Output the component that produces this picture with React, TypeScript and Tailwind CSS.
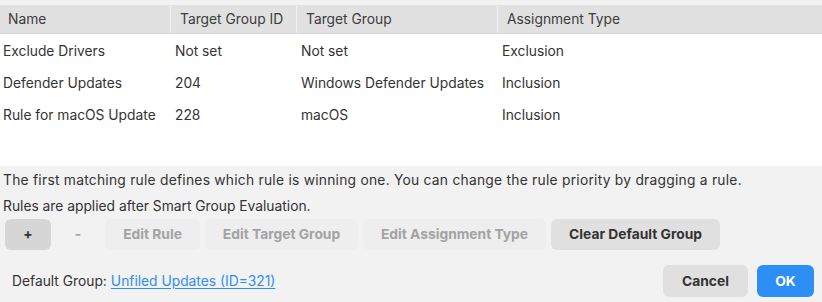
import React from 'react'

const rows = [
  { name: 'Exclude Drivers', id: 'Not set', group: 'Not set', type: 'Exclusion' },
  { name: 'Defender Updates', id: '204', group: 'Windows Defender Updates', type: 'Inclusion' },
  { name: 'Rule for macOS Update', id: '228', group: 'macOS', type: 'Inclusion' },
]

export default function App() {
  return (
    <div
      className="w-[822px] h-[302px] bg-[#f2f2f2] flex flex-col text-[13.8px] text-[#333] overflow-hidden"
      style={{ fontFamily: 'Inter, "Liberation Sans", sans-serif' }}
    >
      <div className="h-[5px] shrink-0" />
      {/* table */}
      <div className="h-[161px] shrink-0 bg-white flex flex-col">
        <div className="h-[29px] flex bg-[#e1e1e1] border-b border-[#d3d3d3] text-[#3c3c3c] pt-[1px]">
          <div className="w-[170px] pl-[8px] flex items-center">Name</div>
          <div className="w-[126px] pl-[9px] flex items-center border-l border-[#f0f0f0]">Target Group ID</div>
          <div className="w-[201px] pl-[9px] flex items-center border-l border-[#f0f0f0]">Target Group</div>
          <div className="flex-1 pl-[9px] flex items-center border-l border-[#f0f0f0]">Assignment Type</div>
        </div>
        <div className="pt-[1px]">
          {rows.map((r) => (
            <div key={r.name} className="h-[32px] flex items-center">
              <div className="w-[171px] pl-[3px]">{r.name}</div>
              <div className="w-[126px] pl-[4px]">{r.id}</div>
              <div className="w-[201px] pl-[4px]">{r.group}</div>
              <div className="flex-1 pl-[4px]">{r.type}</div>
            </div>
          ))}
        </div>
      </div>

      <div className="pt-[2px] pl-[3px] flex flex-col gap-[2px]">
        <p className="leading-[24px] tracking-[0.25px]">
          The first matching rule defines which rule is winning one. You can change the rule priority by dragging a rule.
        </p>
        <p className="leading-[24px]">Rules are applied after Smart Group Evaluation.</p>
      </div>

      <div className="mt-[1px] pl-[5px] flex gap-[5px] h-[31px] font-bold">
        <button className="w-[46px] rounded-[6px] bg-[#d6d6d6] text-[#333]">+</button>
        <button className="w-[44px] rounded-[6px] text-[#a3a3a3]">-</button>
        <button className="w-[95px] rounded-[6px] bg-[#eeeeee] text-[#a3a3a3]">Edit Rule</button>
        <button className="w-[153px] rounded-[6px] bg-[#eeeeee] text-[#a3a3a3]">Edit Target Group</button>
        <button className="w-[183px] rounded-[6px] bg-[#eeeeee] text-[#a3a3a3]">Edit Assignment Type</button>
        <button className="w-[169px] rounded-[6px] bg-[#e0e0e0] text-[#333]">Clear Default Group</button>
      </div>

      <div className="mt-[15px] h-[32px] pl-[12px] pr-[8px] flex items-center">
        <span className="text-[#333]">Default Group:</span>
        <a href="#" className="ml-[4px] text-[#2f8ef0] underline underline-offset-2">
          Unfiled Updates (ID=321)
        </a>
        <div className="ml-auto flex gap-[9px] h-full font-bold">
          <button className="w-[85px] rounded-[6px] bg-[#e0e0e0] text-[#333]">Cancel</button>
          <button className="w-[57px] rounded-[6px] bg-[#2d8ff5] text-white">OK</button>
        </div>
      </div>
    </div>
  )
}
